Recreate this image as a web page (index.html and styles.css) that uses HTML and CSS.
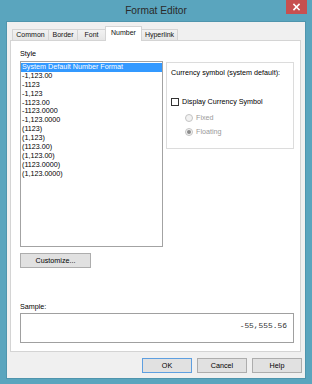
FILE: index.html
```html
<!DOCTYPE html>
<html lang="en">
<head>
    <meta charset="UTF-8">
    <meta name="viewport" content="width=device-width, initial-scale=1.0">
    <title>Format Editor</title>
    <link rel="stylesheet" href="styles.css">
</head>
<body>
    <div class="window">
        <div class="titlebar">
            <div class="title">Format Editor</div>
            <div class="close-btn">
                <svg width="21" height="14" viewBox="0 0 21 14">
                    <path d="M8 4.5 L13 9.5 M13 4.5 L8 9.5" stroke="#fff" stroke-width="1.6" stroke-linecap="square"/>
                </svg>
            </div>
        </div>

        <div class="client">
            <div class="tabs">
                <div class="tab tab-common">Common</div>
                <div class="tab tab-border">Border</div>
                <div class="tab tab-font">Font</div>
                <div class="tab tab-number active">Number</div>
                <div class="tab tab-link">Hyperlink</div>
            </div>

            <div class="panel">
                <div class="label">Style</div>
                <div class="style-row">
                    <div class="list">
                        <div class="list-item selected">System Default Number Format</div>
                        <div class="list-item">-1,123.00</div>
                        <div class="list-item">-1123</div>
                        <div class="list-item">-1,123</div>
                        <div class="list-item">-1123.00</div>
                        <div class="list-item">-1123.0000</div>
                        <div class="list-item">-1,123.0000</div>
                        <div class="list-item">(1123)</div>
                        <div class="list-item">(1,123)</div>
                        <div class="list-item">(1123.00)</div>
                        <div class="list-item">(1,123.00)</div>
                        <div class="list-item">(1123.0000)</div>
                        <div class="list-item">(1,123.0000)</div>
                    </div>

                    <div class="group">
                        <div class="group-line">Currency symbol (system default):</div>
                        <div class="check-row">
                            <span class="checkbox"></span>Display Currency Symbol
                        </div>
                        <div class="radio-row radio-fixed">
                            <span class="radio"></span>Fixed
                        </div>
                        <div class="radio-row radio-floating">
                            <span class="radio checked"></span>Floating
                        </div>
                    </div>
                </div>

                <div class="btn customize-btn">Customize...</div>

                <div class="sample">
                    <div class="label sample-label">Sample:</div>
                    <div class="sample-box">-55,555.56</div>
                </div>
            </div>

            <div class="dialog-buttons">
                <div class="btn default-btn">OK</div>
                <div class="btn">Cancel</div>
                <div class="btn">Help</div>
            </div>
        </div>
    </div>
</body>
</html>
```

FILE: styles.css
```css
* {
    margin: 0;
    padding: 0;
    box-sizing: border-box;
    font-family: 'Liberation Sans', Arial, sans-serif;
}

body {
    width: 312px;
    height: 384px;
    overflow: hidden;
    background: #5aa5be;
    color: #000;
    font-size: 7.2px;
}

.window {
    width: 312px;
    height: 384px;
    display: flex;
    flex-direction: column;
}

.titlebar {
    height: 22px;
    display: grid;
    grid-template-columns: 1fr auto 1fr;
    align-items: center;
}

.title {
    grid-column: 2;
    font-size: 10.2px;
    color: #2a2a2a;
    line-height: 22px;
}

.close-btn {
    grid-column: 3;
    justify-self: end;
    align-self: start;
    width: 21px;
    height: 14px;
    margin-right: 5px;
    background: #c75050;
}

.close-btn svg {
    display: block;
}

.client {
    flex: 1;
    margin: 0 7px 6px 7px;
    background: #f0f0f0;
    padding: 4px 3px 5px 3px;
    display: flex;
    flex-direction: column;
    box-shadow: 0 0 0 1px #4f95ad;
}

/* tab strip */
.tabs {
    height: 14px;
    display: flex;
    align-items: flex-end;
    padding-left: 2px;
}

.tab {
    height: 11px;
    line-height: 10px;
    font-size: 7px;
    text-align: center;
    color: #111;
    background: linear-gradient(#f2f2f2, #e6e6e6);
    border: 1px solid #d4d4d4;
    border-bottom: none;
    margin-left: -1px;
}

.tab-common { width: 37px; margin-left: 0; }
.tab-border { width: 30px; }
.tab-font { width: 29px; }
.tab-number { width: 37px; }
.tab-link { width: 37px; }

.tab.active {
    height: 15px;
    line-height: 12px;
    margin-bottom: -1px;
    background: #fff;
    position: relative;
    z-index: 1;
}

.panel {
    flex: 1;
    margin-right: 1px;
    background: #fff;
    border: 1px solid #d4d4d4;
    padding: 8px 6px 8px 9px;
    display: flex;
    flex-direction: column;
}

.label {
    line-height: 9px;
    margin-bottom: 3px;
}

.style-row {
    display: flex;
    align-items: flex-start;
    gap: 3px;
}

.list {
    width: 143px;
    height: 186px;
    border: 1px solid #a3a3a3;
    padding-top: 1px;
}

.list-item {
    line-height: 8.9px;
    height: 8.9px;
    padding-left: 1px;
    white-space: nowrap;
}

.list-item.selected {
    background: #3399ff;
    color: #fff;
}

.group {
    width: 128px;
    height: 87px;
    margin-top: 1px;
    border: 1px solid #dcdcdc;
    padding: 5px 4px 0 4px;
}

.group-line {
    line-height: 9px;
}

.check-row,
.radio-row {
    display: flex;
    align-items: center;
    height: 9px;
}

.check-row {
    margin-top: 20px;
}

.checkbox {
    width: 8px;
    height: 8px;
    border: 1px solid #333;
    background: #fff;
    margin-right: 3px;
}

.radio-row {
    padding-left: 14px;
    color: #9a9a9a;
}

.radio-fixed {
    margin-top: 7px;
}

.radio-floating {
    margin-top: 5px;
}

.radio {
    width: 8px;
    height: 8px;
    border: 1px solid #c4c4c4;
    border-radius: 50%;
    background: #f2f2f2;
    margin-right: 3px;
    display: flex;
    align-items: center;
    justify-content: center;
}

.radio.checked::after {
    content: '';
    width: 4px;
    height: 4px;
    border-radius: 50%;
    background: #8c8c8c;
}

.btn {
    width: 50px;
    height: 15px;
    line-height: 13px;
    text-align: center;
    background: #e1e1e1;
    border: 1px solid #adadad;
}

.customize-btn {
    width: 71px;
    margin-top: 6px;
}

.sample {
    margin-top: auto;
}

.sample-label {
    margin-bottom: 2px;
}

.sample-box {
    height: 30px;
    border: 1px solid #a0a0a0;
    background: #fff;
    text-align: right;
    padding: 7px 6px 0 0;
    line-height: 10px;
    font-family: 'Liberation Mono', 'Courier New', monospace;
    font-size: 7.9px;
    color: #333;
}

.dialog-buttons {
    margin-top: 6px;
    display: flex;
    justify-content: flex-end;
    gap: 5px;
}

.default-btn {
    border-color: #5e9fe0;
}
```
